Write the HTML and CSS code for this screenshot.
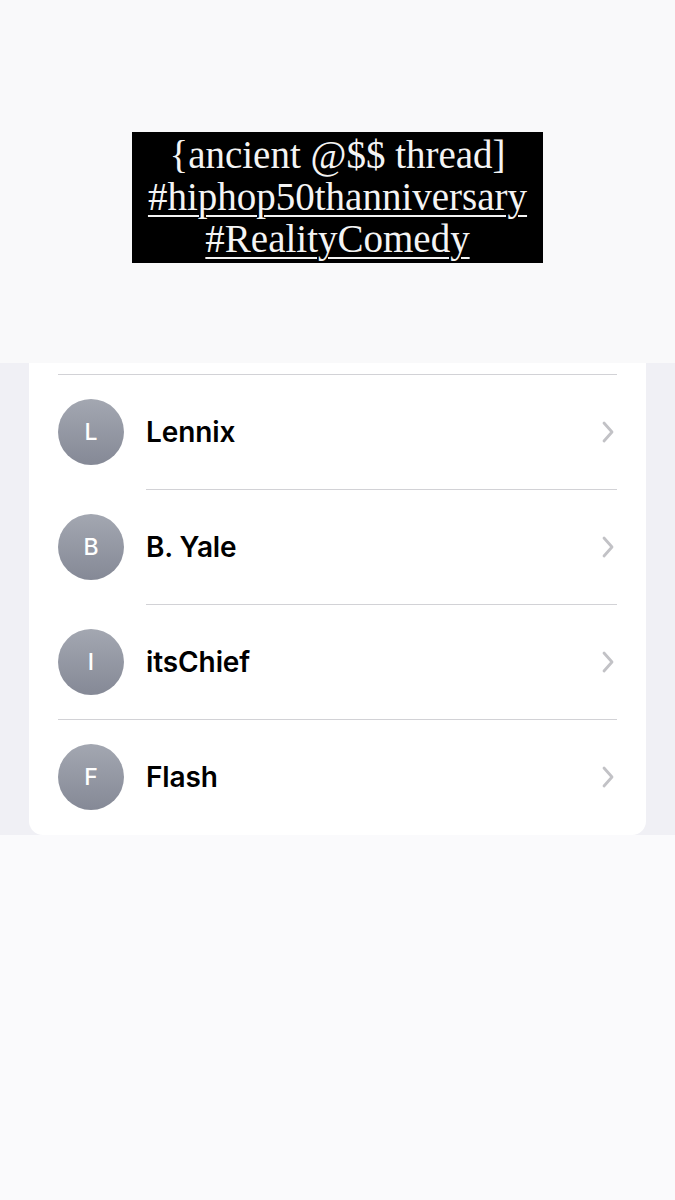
FILE: index.html
```html
<!DOCTYPE html>
<html>
<head>
<meta charset="utf-8">
<link rel="stylesheet" href="styles.css">
</head>
<body>
<div class="top">
  <div class="caption">
    <div class="cap-line">{ancient @$$ thread]</div>
    <div class="cap-line u">#hiphop50thanniversary</div>
    <div class="cap-line u">#RealityComedy</div>
  </div>
</div>
<div class="band">
  <div class="card">
    <div class="row">
      <div class="avatar">L</div>
      <div class="name">Lennix</div>
      <svg class="chev" width="14" height="24" viewBox="0 0 14 24"><path d="M3 3 L11 12 L3 21" fill="none" stroke="#c2c2c6" stroke-width="2.8" stroke-linecap="round" stroke-linejoin="round"/></svg>
    </div>
    <div class="row inset">
      <div class="avatar">B</div>
      <div class="name">B. Yale</div>
      <svg class="chev" width="14" height="24" viewBox="0 0 14 24"><path d="M3 3 L11 12 L3 21" fill="none" stroke="#c2c2c6" stroke-width="2.8" stroke-linecap="round" stroke-linejoin="round"/></svg>
    </div>
    <div class="row inset">
      <div class="avatar">I</div>
      <div class="name">itsChief</div>
      <svg class="chev" width="14" height="24" viewBox="0 0 14 24"><path d="M3 3 L11 12 L3 21" fill="none" stroke="#c2c2c6" stroke-width="2.8" stroke-linecap="round" stroke-linejoin="round"/></svg>
    </div>
    <div class="row">
      <div class="avatar">F</div>
      <div class="name">Flash</div>
      <svg class="chev" width="14" height="24" viewBox="0 0 14 24"><path d="M3 3 L11 12 L3 21" fill="none" stroke="#c2c2c6" stroke-width="2.8" stroke-linecap="round" stroke-linejoin="round"/></svg>
    </div>
  </div>
</div>
<div class="bottom"></div>
</body>
</html>
```
FILE: styles.css
```css
html, body {
  margin: 0;
  padding: 0;
  background: #fafafc;
}
body {
  width: 675px;
  height: 1200px;
  overflow: hidden;
  font-family: Inter, "Liberation Sans", sans-serif;
}
.top {
  height: 363px;
  background: #f9f9fa;
  padding-top: 132px;
  box-sizing: border-box;
  display: flex;
  justify-content: center;
}
.caption {
  width: 411px;
  height: 131px;
  background: #000;
  color: #f4f4f4;
  font-family: "Liberation Serif", serif;
  font-size: 39px;
  line-height: 42px;
  text-align: center;
  padding-top: 2px;
  box-sizing: border-box;
}
.cap-line.u {
  text-decoration: underline;
  text-decoration-thickness: 2px;
  text-underline-offset: 5px;
}
.band {
  background: #f0f0f5;
  padding: 0 29px;
  height: 472px;
}
.card {
  background: #fff;
  border-radius: 0 0 14px 14px;
  height: 472px;
  padding-top: 11px;
  box-sizing: border-box;
}
.row {
  position: relative;
  height: 115px;
  margin-left: 29px;
  margin-right: 29px;
  border-top: 1px solid #d2d2d6;
  display: flex;
  align-items: center;
  box-sizing: border-box;
}
.row.inset {
  border-top: none;
}
.row.inset::before {
  content: "";
  position: absolute;
  top: 0;
  left: 88px;
  right: 0;
  height: 1px;
  background: #d2d2d6;
}
.avatar {
  width: 66px;
  height: 66px;
  border-radius: 50%;
  background: linear-gradient(#a3a7b1, #858996);
  color: #fff;
  font-size: 23px;
  font-weight: 500;
  display: flex;
  align-items: center;
  justify-content: center;
  flex: none;
}
.name {
  margin-left: 22px;
  font-size: 28px;
  font-weight: 600;
  color: #000;
  flex: 1;
  letter-spacing: -0.1px;
}
.chev {
  flex: none;
  margin-right: 2px;
}
```
